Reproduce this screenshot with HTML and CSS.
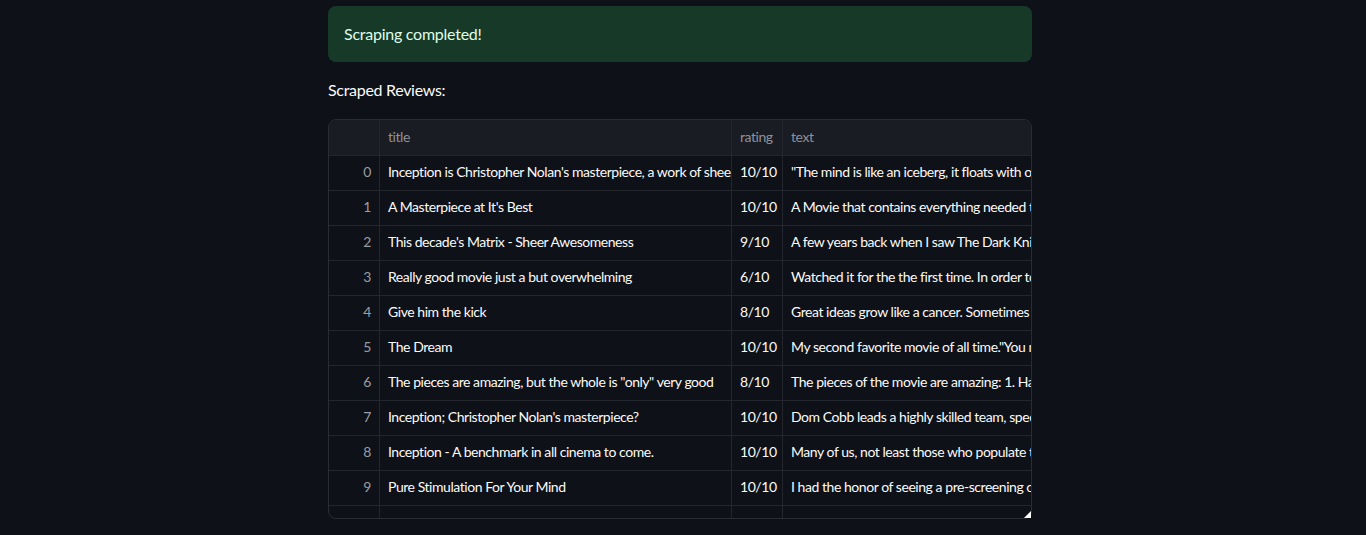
FILE: index.html
```html
<!DOCTYPE html>
<html>
<head>
<meta charset="utf-8">
<link rel="stylesheet" href="styles.css">
</head>
<body>
<main class="main">
  <div class="alert">Scraping completed!</div>
  <p class="label">Scraped Reviews:</p>
  <div class="frame">
    <div class="grid">
      <div class="row head">
        <div class="c idx"></div>
        <div class="c title">title</div>
        <div class="c rating">rating</div>
        <div class="c text">text</div>
      </div>
      <div class="row"><div class="c idx">0</div><div class="c title">Inception is Christopher Nolan's masterpiece, a work of sheer brilliance</div><div class="c rating">10/10</div><div class="c text">"The mind is like an iceberg, it floats with one-seventh of its bulk above water."</div></div>
      <div class="row"><div class="c idx">1</div><div class="c title">A Masterpiece at It's Best</div><div class="c rating">10/10</div><div class="c text">A Movie that contains everything needed to be a masterpiece.</div></div>
      <div class="row"><div class="c idx">2</div><div class="c title">This decade's Matrix - Sheer Awesomeness</div><div class="c rating">9/10</div><div class="c text">A few years back when I saw The Dark Knight, I was blown away.</div></div>
      <div class="row"><div class="c idx">3</div><div class="c title">Really good movie just a but overwhelming</div><div class="c rating">6/10</div><div class="c text">Watched it for the the first time. In order to understand it fully.</div></div>
      <div class="row"><div class="c idx">4</div><div class="c title">Give him the kick</div><div class="c rating">8/10</div><div class="c text">Great ideas grow like a cancer. Sometimes they consume you.</div></div>
      <div class="row"><div class="c idx">5</div><div class="c title">The Dream</div><div class="c rating">10/10</div><div class="c text">My second favorite movie of all time."You mustn't be afraid to dream a little bigger."</div></div>
      <div class="row"><div class="c idx">6</div><div class="c title">The pieces are amazing, but the whole is "only" very good</div><div class="c rating">8/10</div><div class="c text">The pieces of the movie are amazing: 1. Hans Zimmer's score.</div></div>
      <div class="row"><div class="c idx">7</div><div class="c title">Inception; Christopher Nolan's masterpiece?</div><div class="c rating">10/10</div><div class="c text">Dom Cobb leads a highly skilled team, specialized in extraction.</div></div>
      <div class="row"><div class="c idx">8</div><div class="c title">Inception - A benchmark in all cinema to come.</div><div class="c rating">10/10</div><div class="c text">Many of us, not least those who populate this site, love films.</div></div>
      <div class="row"><div class="c idx">9</div><div class="c title">Pure Stimulation For Your Mind</div><div class="c rating">10/10</div><div class="c text">I had the honor of seeing a pre-screening of Inception.</div></div>
      <div class="row last"><div class="c idx">10</div><div class="c title">Another mind-bending masterpiece</div><div class="c rating">9/10</div><div class="c text">One of the best movies I have ever seen in my life.</div></div>
    </div>
    <div class="resize"></div>
  </div>
</main>
</body>
</html>
```

FILE: styles.css
```css
html, body {
  margin: 0;
  padding: 0;
  background: #0e1117;
  height: 535px;
  overflow: hidden;
}
body {
  font-family: "Lato", "Noto Sans", sans-serif;
  color: #fafafa;
}
.main {
  width: 704px;
  margin-left: 328px;
  padding-top: 6px;
}
.alert {
  box-sizing: border-box;
  height: 56px;
  background: #173928;
  color: #dffde9;
  border-radius: 8px;
  padding: 0 16px 2px;
  display: flex;
  align-items: center;
  font-size: 16px;
  letter-spacing: -0.25px;
}
.label {
  margin: 16px 0 17px;
  font-size: 16px;
  line-height: 24px;
  color: #fafafa;
  letter-spacing: -0.3px;
}
.frame {
  position: relative;
  width: 704px;
  height: 400px;
}
.grid {
  box-sizing: border-box;
  width: 704px;
  height: 400px;
  border: 1px solid #2a2c33;
  border-radius: 8px;
  overflow: hidden;
}
.row {
  display: flex;
  height: 35px;
  box-sizing: border-box;
  border-bottom: 1px solid #24262d;
  font-size: 14px;
  letter-spacing: -0.45px;
}
.row.head {
  height: 36px;
  background: #1a1c24;
  color: #8f9197;
}
.row.last .c {
  padding-bottom: 0;
}
.c {
  box-sizing: border-box;
  height: 100%;
  display: flex;
  align-items: center;
  padding: 0 8px 3px;
  white-space: nowrap;
  overflow: hidden;
  border-right: 1px solid #24262d;
  flex: none;
}
.idx {
  width: 51px;
  justify-content: flex-end;
  color: #9a9da3;
}
.head .idx { color: #8f9197; }
.title { width: 352px; }
.rating { width: 51px; }
.text { width: 248px; border-right: none; }
.resize {
  position: absolute;
  right: 1px;
  bottom: 1px;
  width: 0;
  height: 0;
  border-left: 7px solid transparent;
  border-bottom: 7px solid #ffffff;
}
```
